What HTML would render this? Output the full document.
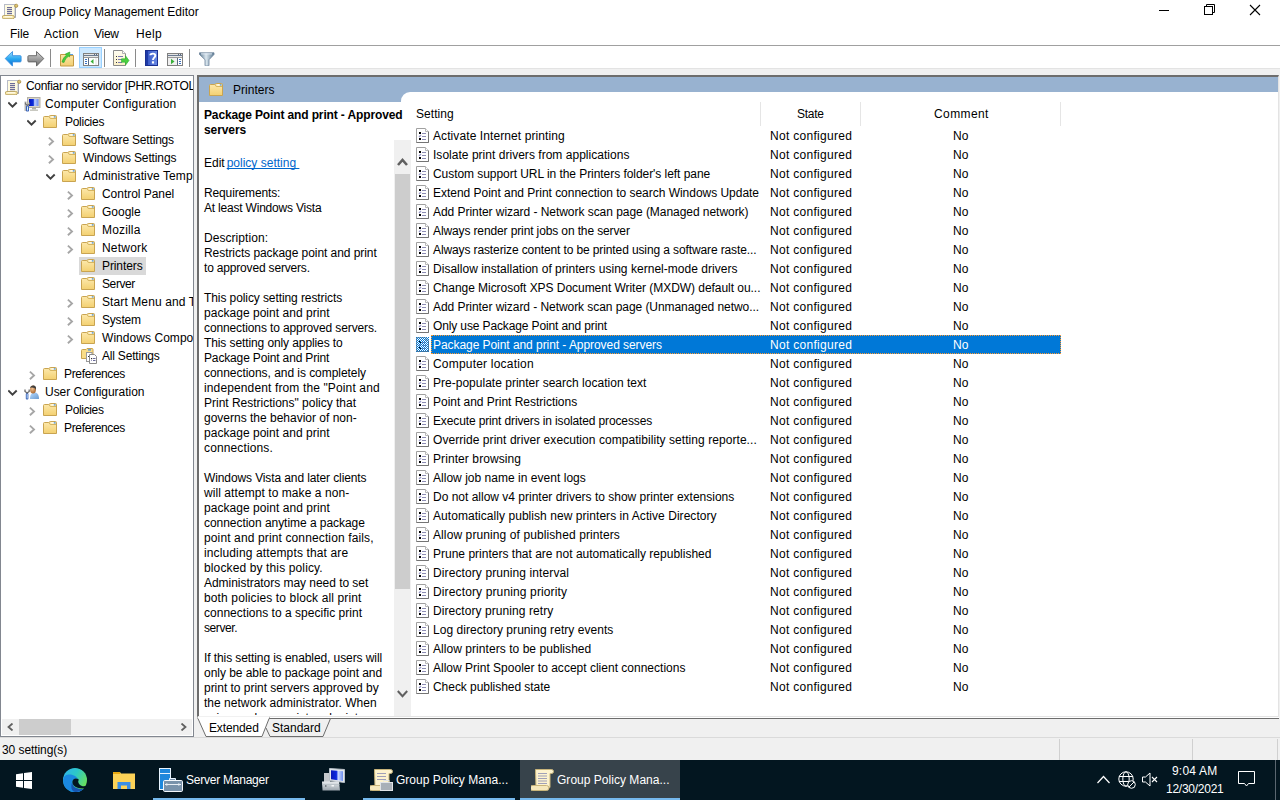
<!DOCTYPE html><html><head><meta charset="utf-8"><style>
html,body{margin:0;padding:0;}
body{width:1280px;height:800px;overflow:hidden;position:relative;background:#ffffff;font-family:"Liberation Sans",sans-serif;font-size:12px;color:#000;}
.a{position:absolute;display:block;}
.t{position:absolute;white-space:nowrap;font-size:12px;line-height:14px;}
.w{color:#fff;}
</style></head><body>
<svg class="a" style="left:2px;top:3px;" width="17" height="16" viewBox="0 0 17 16"><rect x="2.5" y="1.5" width="10.5" height="12.5" fill="#fffbe0" stroke="#b8bcc8"/><path d="M13.5,2.5V14.5H3" fill="none" stroke="#a0a4b4"/><circle cx="14.2" cy="2.8" r="1.6" fill="#dcc472" stroke="#a88c40" stroke-width="0.8"/><rect x="5" y="4" width="5" height="1.2" fill="#6c6c98"/><rect x="5" y="6" width="5" height="1.2" fill="#6c6c98"/><rect x="5" y="8" width="5" height="1.2" fill="#6c6c98"/><rect x="5" y="10" width="5" height="1.2" fill="#6c6c98"/><path d="M1.8,12.5h9a1.6,1.6 0 0 1 0,3.2h-9a1.6,1.6 0 0 1 0,-3.2z" fill="#fbeaa8" stroke="#b8a060" stroke-width="0.9"/><rect x="2.5" y="13.3" width="7.5" height="1" fill="#ffffff"/></svg>
<div class="t" style="left:22px;top:5px;letter-spacing:-0.003px;">Group Policy Management Editor</div>
<div class="a" style="left:1159px;top:10px;width:10px;height:1px;background:#000"></div>
<svg class="a" style="left:1203px;top:4px;" width="12" height="12" viewBox="0 0 12 12"><rect x="1.5" y="2.5" width="8" height="8" fill="#fff" stroke="#000"/><path d="M3.5,2.5V0.5H11.5V8.5H9.5" fill="none" stroke="#000"/></svg>
<svg class="a" style="left:1249px;top:4px;" width="12" height="12" viewBox="0 0 12 12"><path d="M1,1L11,11M11,1L1,11" stroke="#000" stroke-width="1.1"/></svg>
<div class="t" style="left:10px;top:27px;letter-spacing:-0.033px;">File</div>
<div class="t" style="left:44px;top:27px;letter-spacing:0.240px;">Action</div>
<div class="t" style="left:94px;top:27px;letter-spacing:-0.267px;">View</div>
<div class="t" style="left:136px;top:27px;letter-spacing:0.300px;">Help</div>
<div class="a" style="left:0px;top:45px;width:1280px;height:1px;background:#a0a0a0"></div>
<div class="a" style="left:0px;top:68px;width:1280px;height:1px;background:#e3e3e3"></div>
<div class="a" style="left:0px;top:69px;width:1280px;height:691px;background:#f0f0f0"></div>
<svg class="a" style="left:4px;top:50px;" width="18" height="17" viewBox="0 0 18 17"><defs><linearGradient id="gb" x1="0" y1="0" x2="0" y2="1"><stop offset="0" stop-color="#9ee0ff"/><stop offset="0.5" stop-color="#2aa8f0"/><stop offset="1" stop-color="#0a6ad0"/></linearGradient></defs><path d="M1.2,8.5L8.5,1.5v4.2h7.8a0.8,0.8 0 0 1 0.8,0.8v4.6a0.8,0.8 0 0 1 -0.8,0.8h-7.8v4.2z" fill="url(#gb)" stroke="#3a8ee0" stroke-width="0.9"/></svg>
<svg class="a" style="left:27px;top:50px;" width="18" height="17" viewBox="0 0 18 17"><defs><linearGradient id="gg" x1="0" y1="0" x2="0" y2="1"><stop offset="0" stop-color="#d8d8d8"/><stop offset="0.5" stop-color="#a0a0a0"/><stop offset="1" stop-color="#6a6a6a"/></linearGradient></defs><path d="M16.8,8.5L9.5,1.5v4.2h-7.8a0.8,0.8 0 0 0 -0.8,0.8v4.6a0.8,0.8 0 0 0 0.8,0.8h7.8v4.2z" fill="url(#gg)" stroke="#606060" stroke-width="0.9"/></svg>
<div class="a" style="left:50px;top:49px;width:1px;height:18px;background:#8a8a8a"></div>
<svg class="a" style="left:60px;top:51px;" width="15" height="16" viewBox="0 0 15 16"><defs><linearGradient id="gu" x1="0" y1="0" x2="0" y2="1"><stop offset="0" stop-color="#fbe6a8"/><stop offset="1" stop-color="#f2cf72"/></linearGradient></defs><path d="M0.5,3.5h6l1,1h6v10.5h-13z" fill="url(#gu)" stroke="#c49a45"/><rect x="10" y="3" width="3" height="1" fill="#5aa0e8"/><path d="M2,11C3,7.5 4.5,5.5 6.5,4.3L5.3,3L9.8,1L9.5,6L8.3,5.3C6.8,6.3 5,8.5 4,11.5z" fill="#44cc3a" stroke="#2aa02a" stroke-width="0.6"/></svg>
<div class="a" style="left:79px;top:47px;width:23px;height:21px;background:#cce8ff;border:1px solid #99d1ff;box-sizing:border-box"></div>
<svg class="a" style="left:83px;top:53px;" width="16" height="13" viewBox="0 0 16 13"><rect x="0.5" y="0.5" width="15" height="12" fill="#fff" stroke="#808080"/><rect x="1" y="1" width="14" height="1" fill="#e4e4e4"/><rect x="11" y="1" width="1" height="1" fill="#5a6a80"/><rect x="13" y="1" width="1" height="1" fill="#5a6a80"/><rect x="1" y="2" width="14" height="1" fill="#6a7a90"/><rect x="1" y="3" width="14" height="1" fill="#e8e8e8"/><rect x="1" y="4" width="14" height="1" fill="#9a9a9a"/><rect x="5" y="5" width="1" height="7" fill="#5a6a80"/><rect x="2" y="6" width="2" height="1" fill="#3a70c0"/><rect x="2" y="8" width="2" height="1" fill="#3a70c0"/><rect x="2" y="10" width="2" height="1" fill="#3a70c0"/><rect x="12" y="5" width="2" height="7" fill="#efefef"/><path d="M7.5,8.5L10.5,6v5z" fill="#3ab03a"/></svg>
<div class="a" style="left:104px;top:49px;width:1px;height:18px;background:#8a8a8a"></div>
<svg class="a" style="left:113px;top:50px;" width="17" height="16" viewBox="0 0 17 16"><defs><linearGradient id="gx" x1="0" y1="0" x2="0" y2="1"><stop offset="0" stop-color="#fffdf2"/><stop offset="1" stop-color="#fbf0c8"/></linearGradient></defs><path d="M0.5,0.5h9l3,3v12h-12z" fill="url(#gx)" stroke="#8a8a8a"/><path d="M9.5,0.5v3h3" fill="#fff" stroke="#b0b0b0"/><rect x="3" y="6" width="1" height="1" fill="#333"/><rect x="3" y="9" width="1" height="1" fill="#333"/><rect x="3" y="12" width="1" height="1" fill="#333"/><rect x="5" y="6" width="5" height="1" fill="#7a7ab0"/><rect x="5" y="9" width="4" height="1" fill="#7a7ab0"/><rect x="5" y="12" width="4" height="1" fill="#7a7ab0"/><path d="M8.5,8.8h4v-3l3.5,4.7l-3.5,4.7v-3h-4z" fill="#4ad040" stroke="#30b030" stroke-width="0.6"/></svg>
<div class="a" style="left:135px;top:49px;width:1px;height:18px;background:#8a8a8a"></div>
<svg class="a" style="left:145px;top:50px;" width="14" height="16" viewBox="0 0 14 16"><defs><linearGradient id="gh" x1="0" y1="0" x2="1" y2="0"><stop offset="0" stop-color="#3050c0"/><stop offset="1" stop-color="#6a8ae6"/></linearGradient></defs><rect x="0.5" y="0.5" width="12" height="15" fill="url(#gh)" stroke="#1a2f90"/><rect x="1" y="1" width="2" height="14" fill="#1e3aa8"/><path d="M5.3,5.2C5.3,3.2 10.3,3 10.3,5.6C10.3,7.6 8,7.8 8,10" fill="none" stroke="#fff" stroke-width="1.9"/><rect x="6.9" y="11.3" width="2.2" height="2.2" fill="#fff"/></svg>
<svg class="a" style="left:167px;top:53px;" width="16" height="13" viewBox="0 0 16 13"><rect x="0.5" y="0.5" width="15" height="12" fill="#fff" stroke="#808080"/><rect x="1" y="1" width="14" height="1" fill="#e4e4e4"/><rect x="11" y="1" width="1" height="1" fill="#5a6a80"/><rect x="13" y="1" width="1" height="1" fill="#5a6a80"/><rect x="1" y="2" width="14" height="1" fill="#6a7a90"/><rect x="1" y="3" width="14" height="1" fill="#e8e8e8"/><rect x="1" y="4" width="14" height="1" fill="#9a9a9a"/><rect x="1" y="5" width="9" height="7" fill="#f0f0f0"/><rect x="10" y="5" width="1" height="7" fill="#5a6a80"/><rect x="12" y="6" width="2" height="1" fill="#3a70c0"/><rect x="12" y="8" width="2" height="1" fill="#3a70c0"/><rect x="12" y="10" width="2" height="1" fill="#3a70c0"/><path d="M4,5.8L7.5,8.5L4,11.2z" fill="#3ab03a"/></svg>
<div class="a" style="left:189px;top:49px;width:1px;height:18px;background:#8a8a8a"></div>
<svg class="a" style="left:199px;top:52px;" width="16" height="14" viewBox="0 0 16 14"><defs><linearGradient id="gf" x1="0" y1="0" x2="1" y2="0"><stop offset="0" stop-color="#5a7890"/><stop offset="0.45" stop-color="#dce8f0"/><stop offset="1" stop-color="#5a7890"/></linearGradient></defs><path d="M0.5,0.8h14.5v1.7l-5,5.2v5.5a0.8,0.8 0 0 1 -0.8,0.8h-2.4a0.8,0.8 0 0 1 -0.8,-0.8v-5.5l-5.5,-5.2z" fill="url(#gf)" stroke="#6b8199" stroke-width="0.8"/><rect x="2" y="1.5" width="11" height="0.8" fill="#eef6ff"/></svg>
<div class="a" style="left:0px;top:75px;width:194px;height:662px;background:#fff;border:1px solid #828790;box-sizing:border-box"></div>
<div class="a" style="left:1px;top:76px;width:192px;height:643px;overflow:hidden;">
<div class="a" style="left:78px;top:181px;width:67px;height:18px;background:#d9d9d9"></div>
<svg class="a" style="left:4px;top:3px;" width="17" height="16" viewBox="0 0 17 16"><rect x="2.5" y="1.5" width="10.5" height="12.5" fill="#fffbe0" stroke="#b8bcc8"/><path d="M13.5,2.5V14.5H3" fill="none" stroke="#a0a4b4"/><circle cx="14.2" cy="2.8" r="1.6" fill="#dcc472" stroke="#a88c40" stroke-width="0.8"/><rect x="5" y="4" width="5" height="1.2" fill="#6c6c98"/><rect x="5" y="6" width="5" height="1.2" fill="#6c6c98"/><rect x="5" y="8" width="5" height="1.2" fill="#6c6c98"/><rect x="5" y="10" width="5" height="1.2" fill="#6c6c98"/><path d="M1.8,12.5h9a1.6,1.6 0 0 1 0,3.2h-9a1.6,1.6 0 0 1 0,-3.2z" fill="#fbeaa8" stroke="#b8a060" stroke-width="0.9"/><rect x="2.5" y="13.3" width="7.5" height="1" fill="#ffffff"/></svg>
<div class="t" style="left:25px;top:3px;letter-spacing:-0.3px">Confiar no servidor [PHR.ROTOL</div>
<svg class="a" style="left:7px;top:24px;" width="10" height="9" viewBox="0 0 10 9"><path d="M0.3,2.5L4.5,6.7L8.7,2.5" fill="none" stroke="#404040" stroke-width="1.9"/></svg>
<svg class="a" style="left:23px;top:21px;" width="17" height="15" viewBox="0 0 17 15"><defs><linearGradient id="gc" x1="0" y1="0" x2="1" y2="0"><stop offset="0" stop-color="#0010c8"/><stop offset="0.45" stop-color="#1030d8"/><stop offset="0.6" stop-color="#c0d0ff"/><stop offset="1" stop-color="#6a8af0"/></linearGradient></defs><rect x="3.5" y="0.5" width="12.5" height="10" fill="#d8d4c8" stroke="#b4b0a4"/><rect x="5" y="2" width="9.5" height="7" fill="url(#gc)"/><rect x="8" y="11" width="4" height="1.5" fill="#b0b0a8"/><rect x="6" y="12.5" width="8" height="1.5" fill="#c8c8c0"/><rect x="0.5" y="4.5" width="2" height="9.5" fill="#b8b8b8"/><rect x="2" y="8.5" width="3" height="6" rx="0.8" fill="#3a62b8"/><rect x="3" y="9.5" width="1" height="4" fill="#d0ecff"/><path d="M1.5,5.5V7L3.5,8.5L5.5,7V5.5" fill="none" stroke="#707070" stroke-width="1.2"/></svg>
<div class="t" style="left:44px;top:21px;letter-spacing:0.179px;">Computer Configuration</div>
<svg class="a" style="left:26px;top:42px;" width="10" height="9" viewBox="0 0 10 9"><path d="M0.3,2.5L4.5,6.7L8.7,2.5" fill="none" stroke="#404040" stroke-width="1.9"/></svg>
<svg class="a" style="left:42px;top:39px;" width="14" height="13" viewBox="0 0 14 13"><defs><linearGradient id="gfo" x1="0" y1="0" x2="0" y2="1"><stop offset="0" stop-color="#fdeab0"/><stop offset="1" stop-color="#f3d070"/></linearGradient></defs><path d="M0.5,12.5V2.5a1,1 0 0 1 1,-1H5.8L7.2,0.5H12.5a1,1 0 0 1 1,1V12.5Z" fill="url(#gfo)" stroke="#c9a451"/><path d="M6.2,1.8L7.2,3.5H13" fill="none" stroke="#d6b560"/><rect x="8.3" y="1.3" width="3" height="1.2" fill="#ffffff"/><rect x="10.8" y="1.3" width="1.8" height="1.2" fill="#3d8ee8"/></svg>
<div class="t" style="left:64px;top:39px;letter-spacing:-0.279px;">Policies</div>
<svg class="a" style="left:47px;top:60px;" width="7" height="11" viewBox="0 0 7 11"><path d="M0.9,1.6L5,5.4L0.9,9.2" fill="none" stroke="#a6a6a6" stroke-width="1.9"/></svg>
<svg class="a" style="left:61px;top:57px;" width="14" height="13" viewBox="0 0 14 13"><defs><linearGradient id="gfo" x1="0" y1="0" x2="0" y2="1"><stop offset="0" stop-color="#fdeab0"/><stop offset="1" stop-color="#f3d070"/></linearGradient></defs><path d="M0.5,12.5V2.5a1,1 0 0 1 1,-1H5.8L7.2,0.5H12.5a1,1 0 0 1 1,1V12.5Z" fill="url(#gfo)" stroke="#c9a451"/><path d="M6.2,1.8L7.2,3.5H13" fill="none" stroke="#d6b560"/><rect x="8.3" y="1.3" width="3" height="1.2" fill="#ffffff"/><rect x="10.8" y="1.3" width="1.8" height="1.2" fill="#3d8ee8"/></svg>
<div class="t" style="left:82px;top:57px;letter-spacing:-0.184px;">Software Settings</div>
<svg class="a" style="left:47px;top:78px;" width="7" height="11" viewBox="0 0 7 11"><path d="M0.9,1.6L5,5.4L0.9,9.2" fill="none" stroke="#a6a6a6" stroke-width="1.9"/></svg>
<svg class="a" style="left:61px;top:75px;" width="14" height="13" viewBox="0 0 14 13"><defs><linearGradient id="gfo" x1="0" y1="0" x2="0" y2="1"><stop offset="0" stop-color="#fdeab0"/><stop offset="1" stop-color="#f3d070"/></linearGradient></defs><path d="M0.5,12.5V2.5a1,1 0 0 1 1,-1H5.8L7.2,0.5H12.5a1,1 0 0 1 1,1V12.5Z" fill="url(#gfo)" stroke="#c9a451"/><path d="M6.2,1.8L7.2,3.5H13" fill="none" stroke="#d6b560"/><rect x="8.3" y="1.3" width="3" height="1.2" fill="#ffffff"/><rect x="10.8" y="1.3" width="1.8" height="1.2" fill="#3d8ee8"/></svg>
<div class="t" style="left:82px;top:75px;letter-spacing:-0.130px;">Windows Settings</div>
<svg class="a" style="left:45px;top:96px;" width="10" height="9" viewBox="0 0 10 9"><path d="M0.3,2.5L4.5,6.7L8.7,2.5" fill="none" stroke="#404040" stroke-width="1.9"/></svg>
<svg class="a" style="left:61px;top:93px;" width="14" height="13" viewBox="0 0 14 13"><defs><linearGradient id="gfo" x1="0" y1="0" x2="0" y2="1"><stop offset="0" stop-color="#fdeab0"/><stop offset="1" stop-color="#f3d070"/></linearGradient></defs><path d="M0.5,12.5V2.5a1,1 0 0 1 1,-1H5.8L7.2,0.5H12.5a1,1 0 0 1 1,1V12.5Z" fill="url(#gfo)" stroke="#c9a451"/><path d="M6.2,1.8L7.2,3.5H13" fill="none" stroke="#d6b560"/><rect x="8.3" y="1.3" width="3" height="1.2" fill="#ffffff"/><rect x="10.8" y="1.3" width="1.8" height="1.2" fill="#3d8ee8"/></svg>
<div class="t" style="left:82px;top:93px;letter-spacing:0.1px">Administrative Templates</div>
<svg class="a" style="left:66px;top:114px;" width="7" height="11" viewBox="0 0 7 11"><path d="M0.9,1.6L5,5.4L0.9,9.2" fill="none" stroke="#a6a6a6" stroke-width="1.9"/></svg>
<svg class="a" style="left:80px;top:111px;" width="14" height="13" viewBox="0 0 14 13"><defs><linearGradient id="gfo" x1="0" y1="0" x2="0" y2="1"><stop offset="0" stop-color="#fdeab0"/><stop offset="1" stop-color="#f3d070"/></linearGradient></defs><path d="M0.5,12.5V2.5a1,1 0 0 1 1,-1H5.8L7.2,0.5H12.5a1,1 0 0 1 1,1V12.5Z" fill="url(#gfo)" stroke="#c9a451"/><path d="M6.2,1.8L7.2,3.5H13" fill="none" stroke="#d6b560"/><rect x="8.3" y="1.3" width="3" height="1.2" fill="#ffffff"/><rect x="10.8" y="1.3" width="1.8" height="1.2" fill="#3d8ee8"/></svg>
<div class="t" style="left:101px;top:111px;letter-spacing:-0.042px;">Control Panel</div>
<svg class="a" style="left:66px;top:132px;" width="7" height="11" viewBox="0 0 7 11"><path d="M0.9,1.6L5,5.4L0.9,9.2" fill="none" stroke="#a6a6a6" stroke-width="1.9"/></svg>
<svg class="a" style="left:80px;top:129px;" width="14" height="13" viewBox="0 0 14 13"><defs><linearGradient id="gfo" x1="0" y1="0" x2="0" y2="1"><stop offset="0" stop-color="#fdeab0"/><stop offset="1" stop-color="#f3d070"/></linearGradient></defs><path d="M0.5,12.5V2.5a1,1 0 0 1 1,-1H5.8L7.2,0.5H12.5a1,1 0 0 1 1,1V12.5Z" fill="url(#gfo)" stroke="#c9a451"/><path d="M6.2,1.8L7.2,3.5H13" fill="none" stroke="#d6b560"/><rect x="8.3" y="1.3" width="3" height="1.2" fill="#ffffff"/><rect x="10.8" y="1.3" width="1.8" height="1.2" fill="#3d8ee8"/></svg>
<div class="t" style="left:101px;top:129px;letter-spacing:-0.000px;">Google</div>
<svg class="a" style="left:66px;top:150px;" width="7" height="11" viewBox="0 0 7 11"><path d="M0.9,1.6L5,5.4L0.9,9.2" fill="none" stroke="#a6a6a6" stroke-width="1.9"/></svg>
<svg class="a" style="left:80px;top:147px;" width="14" height="13" viewBox="0 0 14 13"><defs><linearGradient id="gfo" x1="0" y1="0" x2="0" y2="1"><stop offset="0" stop-color="#fdeab0"/><stop offset="1" stop-color="#f3d070"/></linearGradient></defs><path d="M0.5,12.5V2.5a1,1 0 0 1 1,-1H5.8L7.2,0.5H12.5a1,1 0 0 1 1,1V12.5Z" fill="url(#gfo)" stroke="#c9a451"/><path d="M6.2,1.8L7.2,3.5H13" fill="none" stroke="#d6b560"/><rect x="8.3" y="1.3" width="3" height="1.2" fill="#ffffff"/><rect x="10.8" y="1.3" width="1.8" height="1.2" fill="#3d8ee8"/></svg>
<div class="t" style="left:101px;top:147px;letter-spacing:0.167px;">Mozilla</div>
<svg class="a" style="left:66px;top:168px;" width="7" height="11" viewBox="0 0 7 11"><path d="M0.9,1.6L5,5.4L0.9,9.2" fill="none" stroke="#a6a6a6" stroke-width="1.9"/></svg>
<svg class="a" style="left:80px;top:165px;" width="14" height="13" viewBox="0 0 14 13"><defs><linearGradient id="gfo" x1="0" y1="0" x2="0" y2="1"><stop offset="0" stop-color="#fdeab0"/><stop offset="1" stop-color="#f3d070"/></linearGradient></defs><path d="M0.5,12.5V2.5a1,1 0 0 1 1,-1H5.8L7.2,0.5H12.5a1,1 0 0 1 1,1V12.5Z" fill="url(#gfo)" stroke="#c9a451"/><path d="M6.2,1.8L7.2,3.5H13" fill="none" stroke="#d6b560"/><rect x="8.3" y="1.3" width="3" height="1.2" fill="#ffffff"/><rect x="10.8" y="1.3" width="1.8" height="1.2" fill="#3d8ee8"/></svg>
<div class="t" style="left:101px;top:165px;letter-spacing:0.200px;">Network</div>
<svg class="a" style="left:80px;top:183px;" width="14" height="13" viewBox="0 0 14 13"><defs><linearGradient id="gfo" x1="0" y1="0" x2="0" y2="1"><stop offset="0" stop-color="#fdeab0"/><stop offset="1" stop-color="#f3d070"/></linearGradient></defs><path d="M0.5,12.5V2.5a1,1 0 0 1 1,-1H5.8L7.2,0.5H12.5a1,1 0 0 1 1,1V12.5Z" fill="url(#gfo)" stroke="#c9a451"/><path d="M6.2,1.8L7.2,3.5H13" fill="none" stroke="#d6b560"/><rect x="8.3" y="1.3" width="3" height="1.2" fill="#ffffff"/><rect x="10.8" y="1.3" width="1.8" height="1.2" fill="#3d8ee8"/></svg>
<div class="t" style="left:101px;top:183px;letter-spacing:-0.100px;">Printers</div>
<svg class="a" style="left:80px;top:201px;" width="14" height="13" viewBox="0 0 14 13"><defs><linearGradient id="gfo" x1="0" y1="0" x2="0" y2="1"><stop offset="0" stop-color="#fdeab0"/><stop offset="1" stop-color="#f3d070"/></linearGradient></defs><path d="M0.5,12.5V2.5a1,1 0 0 1 1,-1H5.8L7.2,0.5H12.5a1,1 0 0 1 1,1V12.5Z" fill="url(#gfo)" stroke="#c9a451"/><path d="M6.2,1.8L7.2,3.5H13" fill="none" stroke="#d6b560"/><rect x="8.3" y="1.3" width="3" height="1.2" fill="#ffffff"/><rect x="10.8" y="1.3" width="1.8" height="1.2" fill="#3d8ee8"/></svg>
<div class="t" style="left:101px;top:201px;letter-spacing:-0.400px;">Server</div>
<svg class="a" style="left:66px;top:222px;" width="7" height="11" viewBox="0 0 7 11"><path d="M0.9,1.6L5,5.4L0.9,9.2" fill="none" stroke="#a6a6a6" stroke-width="1.9"/></svg>
<svg class="a" style="left:80px;top:219px;" width="14" height="13" viewBox="0 0 14 13"><defs><linearGradient id="gfo" x1="0" y1="0" x2="0" y2="1"><stop offset="0" stop-color="#fdeab0"/><stop offset="1" stop-color="#f3d070"/></linearGradient></defs><path d="M0.5,12.5V2.5a1,1 0 0 1 1,-1H5.8L7.2,0.5H12.5a1,1 0 0 1 1,1V12.5Z" fill="url(#gfo)" stroke="#c9a451"/><path d="M6.2,1.8L7.2,3.5H13" fill="none" stroke="#d6b560"/><rect x="8.3" y="1.3" width="3" height="1.2" fill="#ffffff"/><rect x="10.8" y="1.3" width="1.8" height="1.2" fill="#3d8ee8"/></svg>
<div class="t" style="left:101px;top:219px;letter-spacing:0.1px">Start Menu and Taskbar</div>
<svg class="a" style="left:66px;top:240px;" width="7" height="11" viewBox="0 0 7 11"><path d="M0.9,1.6L5,5.4L0.9,9.2" fill="none" stroke="#a6a6a6" stroke-width="1.9"/></svg>
<svg class="a" style="left:80px;top:237px;" width="14" height="13" viewBox="0 0 14 13"><defs><linearGradient id="gfo" x1="0" y1="0" x2="0" y2="1"><stop offset="0" stop-color="#fdeab0"/><stop offset="1" stop-color="#f3d070"/></linearGradient></defs><path d="M0.5,12.5V2.5a1,1 0 0 1 1,-1H5.8L7.2,0.5H12.5a1,1 0 0 1 1,1V12.5Z" fill="url(#gfo)" stroke="#c9a451"/><path d="M6.2,1.8L7.2,3.5H13" fill="none" stroke="#d6b560"/><rect x="8.3" y="1.3" width="3" height="1.2" fill="#ffffff"/><rect x="10.8" y="1.3" width="1.8" height="1.2" fill="#3d8ee8"/></svg>
<div class="t" style="left:101px;top:237px;letter-spacing:-0.200px;">System</div>
<svg class="a" style="left:66px;top:258px;" width="7" height="11" viewBox="0 0 7 11"><path d="M0.9,1.6L5,5.4L0.9,9.2" fill="none" stroke="#a6a6a6" stroke-width="1.9"/></svg>
<svg class="a" style="left:80px;top:255px;" width="14" height="13" viewBox="0 0 14 13"><defs><linearGradient id="gfo" x1="0" y1="0" x2="0" y2="1"><stop offset="0" stop-color="#fdeab0"/><stop offset="1" stop-color="#f3d070"/></linearGradient></defs><path d="M0.5,12.5V2.5a1,1 0 0 1 1,-1H5.8L7.2,0.5H12.5a1,1 0 0 1 1,1V12.5Z" fill="url(#gfo)" stroke="#c9a451"/><path d="M6.2,1.8L7.2,3.5H13" fill="none" stroke="#d6b560"/><rect x="8.3" y="1.3" width="3" height="1.2" fill="#ffffff"/><rect x="10.8" y="1.3" width="1.8" height="1.2" fill="#3d8ee8"/></svg>
<div class="t" style="left:101px;top:255px;letter-spacing:0.05px">Windows Components</div>
<svg class="a" style="left:80px;top:272px;" width="17" height="17" viewBox="0 0 17 17"><path d="M0.5,10.5V2.5a1,1 0 0 1 1,-1H5L6,0.5H11a1,1 0 0 1 1,1V10.5Z" fill="#f9dd88" stroke="#c9a451"/><rect x="7" y="1.3" width="3" height="1.2" fill="#3d8ee8"/><rect x="5.5" y="4.5" width="5.5" height="9" fill="#fff" stroke="#9a9a9a"/><rect x="7" y="8" width="1" height="1" fill="#333"/><path d="M8.5,6.5H13.5L15.5,8.5V15.5H8.5Z" fill="#fff" stroke="#8a8a8a"/><rect x="10" y="10" width="1.2" height="1.2" fill="#333"/><rect x="12" y="10" width="2.5" height="1" fill="#6a6a98"/><rect x="10" y="12" width="1" height="1" fill="#9a9ac8"/><rect x="12" y="12" width="2.5" height="1" fill="#6a6a98"/></svg>
<div class="t" style="left:101px;top:273px;letter-spacing:-0.200px;">All Settings</div>
<svg class="a" style="left:28px;top:294px;" width="7" height="11" viewBox="0 0 7 11"><path d="M0.9,1.6L5,5.4L0.9,9.2" fill="none" stroke="#a6a6a6" stroke-width="1.9"/></svg>
<svg class="a" style="left:42px;top:291px;" width="14" height="13" viewBox="0 0 14 13"><defs><linearGradient id="gfo" x1="0" y1="0" x2="0" y2="1"><stop offset="0" stop-color="#fdeab0"/><stop offset="1" stop-color="#f3d070"/></linearGradient></defs><path d="M0.5,12.5V2.5a1,1 0 0 1 1,-1H5.8L7.2,0.5H12.5a1,1 0 0 1 1,1V12.5Z" fill="url(#gfo)" stroke="#c9a451"/><path d="M6.2,1.8L7.2,3.5H13" fill="none" stroke="#d6b560"/><rect x="8.3" y="1.3" width="3" height="1.2" fill="#ffffff"/><rect x="10.8" y="1.3" width="1.8" height="1.2" fill="#3d8ee8"/></svg>
<div class="t" style="left:63px;top:291px;letter-spacing:-0.340px;">Preferences</div>
<svg class="a" style="left:7px;top:312px;" width="10" height="9" viewBox="0 0 10 9"><path d="M0.3,2.5L4.5,6.7L8.7,2.5" fill="none" stroke="#404040" stroke-width="1.9"/></svg>
<svg class="a" style="left:23px;top:308px;" width="17" height="16" viewBox="0 0 17 16"><defs><radialGradient id="gface" cx="0.4" cy="0.4" r="0.7"><stop offset="0" stop-color="#f0c090"/><stop offset="1" stop-color="#a05a20"/></radialGradient><linearGradient id="gbody" x1="0" y1="0" x2="1" y2="1"><stop offset="0" stop-color="#b8dcff"/><stop offset="1" stop-color="#6a9ad0"/></linearGradient></defs><path d="M6,15C6,10 8,8.5 10.5,8.5C13,8.5 15,10 15,15z" fill="url(#gbody)"/><ellipse cx="9" cy="5.5" rx="2.9" ry="4" fill="url(#gface)"/><path d="M6,4C6.5,1 11,0.5 12,3.5L12,6C11,3.5 8,3 6,4z" fill="#404040"/><rect x="1.8" y="9" width="2.6" height="6.5" rx="1" fill="#3a62b8"/><rect x="2.7" y="10" width="0.9" height="4.5" fill="#c8e8ff"/><path d="M1,5.5V7.5L3.1,9L5.2,7.5V5.5" fill="none" stroke="#6a6a6a" stroke-width="1.3"/></svg>
<div class="t" style="left:44px;top:309px;letter-spacing:-0.035px;">User Configuration</div>
<svg class="a" style="left:28px;top:330px;" width="7" height="11" viewBox="0 0 7 11"><path d="M0.9,1.6L5,5.4L0.9,9.2" fill="none" stroke="#a6a6a6" stroke-width="1.9"/></svg>
<svg class="a" style="left:42px;top:327px;" width="14" height="13" viewBox="0 0 14 13"><defs><linearGradient id="gfo" x1="0" y1="0" x2="0" y2="1"><stop offset="0" stop-color="#fdeab0"/><stop offset="1" stop-color="#f3d070"/></linearGradient></defs><path d="M0.5,12.5V2.5a1,1 0 0 1 1,-1H5.8L7.2,0.5H12.5a1,1 0 0 1 1,1V12.5Z" fill="url(#gfo)" stroke="#c9a451"/><path d="M6.2,1.8L7.2,3.5H13" fill="none" stroke="#d6b560"/><rect x="8.3" y="1.3" width="3" height="1.2" fill="#ffffff"/><rect x="10.8" y="1.3" width="1.8" height="1.2" fill="#3d8ee8"/></svg>
<div class="t" style="left:64px;top:327px;letter-spacing:-0.343px;">Policies</div>
<svg class="a" style="left:28px;top:348px;" width="7" height="11" viewBox="0 0 7 11"><path d="M0.9,1.6L5,5.4L0.9,9.2" fill="none" stroke="#a6a6a6" stroke-width="1.9"/></svg>
<svg class="a" style="left:42px;top:345px;" width="14" height="13" viewBox="0 0 14 13"><defs><linearGradient id="gfo" x1="0" y1="0" x2="0" y2="1"><stop offset="0" stop-color="#fdeab0"/><stop offset="1" stop-color="#f3d070"/></linearGradient></defs><path d="M0.5,12.5V2.5a1,1 0 0 1 1,-1H5.8L7.2,0.5H12.5a1,1 0 0 1 1,1V12.5Z" fill="url(#gfo)" stroke="#c9a451"/><path d="M6.2,1.8L7.2,3.5H13" fill="none" stroke="#d6b560"/><rect x="8.3" y="1.3" width="3" height="1.2" fill="#ffffff"/><rect x="10.8" y="1.3" width="1.8" height="1.2" fill="#3d8ee8"/></svg>
<div class="t" style="left:63px;top:345px;letter-spacing:-0.340px;">Preferences</div>
</div>
<div class="a" style="left:2px;top:719px;width:190px;height:16px;background:#f0f0f0"></div>
<div class="a" style="left:19px;top:719px;width:52px;height:16px;background:#cdcdcd"></div>
<svg class="a" style="left:7px;top:723px;" width="7" height="8" viewBox="0 0 7 8"><path d="M5.5,0.5L1.5,4L5.5,7.5" fill="none" stroke="#606060" stroke-width="1.8"/></svg>
<svg class="a" style="left:180px;top:723px;" width="7" height="8" viewBox="0 0 7 8"><path d="M1.5,0.5L5.5,4L1.5,7.5" fill="none" stroke="#606060" stroke-width="1.8"/></svg>
<div class="a" style="left:197px;top:75px;width:1082px;height:642px;background:#fff;box-sizing:border-box;border-top:2px solid #6d6d6d;border-left:2px solid #6d6d6d;border-right:1px solid #e3e3e3;border-bottom:1px solid #e3e3e3"></div>
<div class="a" style="left:197px;top:717px;width:1082px;height:1px;background:#fff"></div>
<div class="a" style="left:199px;top:77px;width:1079px;height:25px;background:#98b2d0"></div>
<svg class="a" style="left:209px;top:83px;" width="14" height="13" viewBox="0 0 14 13"><defs><linearGradient id="gfo" x1="0" y1="0" x2="0" y2="1"><stop offset="0" stop-color="#fdeab0"/><stop offset="1" stop-color="#f3d070"/></linearGradient></defs><path d="M0.5,12.5V2.5a1,1 0 0 1 1,-1H5.8L7.2,0.5H12.5a1,1 0 0 1 1,1V12.5Z" fill="url(#gfo)" stroke="#c9a451"/><path d="M6.2,1.8L7.2,3.5H13" fill="none" stroke="#d6b560"/><rect x="8.3" y="1.3" width="3" height="1.2" fill="#ffffff"/><rect x="10.8" y="1.3" width="1.8" height="1.2" fill="#3d8ee8"/></svg>
<div class="t" style="left:233px;top:83px;letter-spacing:0.014px;">Printers</div>
<div class="a" style="left:401px;top:92px;width:877px;height:624px;background:#fff;border-top-left-radius:9px"></div>
<div class="t" style="left:204px;top:108px;letter-spacing:-0.132px;"><b>Package Point and print - Approved</b></div>
<div class="t" style="left:204px;top:123px;letter-spacing:-0.092px;"><b>servers</b></div>
<div class="t" style="left:204px;top:156px;">Edit<span style="margin-left:2px;color:#0066cc;text-decoration:underline;text-decoration-skip-ink:none">policy setting&nbsp;</span></div>
<div class="a" style="left:199px;top:102px;width:195px;height:613px;overflow:hidden">
<div class="t" style="left:5px;top:84px;letter-spacing:-0.133px;">Requirements:</div>
<div class="t" style="left:5px;top:99px;letter-spacing:-0.200px;">At least Windows Vista</div>
<div class="t" style="left:5px;top:129px;letter-spacing:0.055px;">Description:</div>
<div class="t" style="left:5px;top:144px;letter-spacing:-0.062px;">Restricts package point and print</div>
<div class="t" style="left:5px;top:159px;letter-spacing:-0.179px;">to approved servers.</div>
<div class="t" style="left:5px;top:189px;letter-spacing:-0.089px;">This policy setting restricts</div>
<div class="t" style="left:5px;top:204px;letter-spacing:0.032px;">package point and print</div>
<div class="t" style="left:5px;top:219px;letter-spacing:-0.116px;">connections to approved servers.</div>
<div class="t" style="left:5px;top:234px;letter-spacing:-0.100px;">This setting only applies to</div>
<div class="t" style="left:5px;top:249px;letter-spacing:-0.150px;">Package Point and Print</div>
<div class="t" style="left:5px;top:264px;letter-spacing:-0.045px;">connections, and is completely</div>
<div class="t" style="left:5px;top:279px;letter-spacing:0.130px;">independent from the "Point and</div>
<div class="t" style="left:5px;top:294px;letter-spacing:-0.010px;">Print Restrictions" policy that</div>
<div class="t" style="left:5px;top:309px;letter-spacing:-0.004px;">governs the behavior of non-</div>
<div class="t" style="left:5px;top:324px;letter-spacing:0.032px;">package point and print</div>
<div class="t" style="left:5px;top:339px;letter-spacing:0.127px;">connections.</div>
<div class="t" style="left:5px;top:369px;letter-spacing:-0.110px;">Windows Vista and later clients</div>
<div class="t" style="left:5px;top:384px;letter-spacing:0.069px;">will attempt to make a non-</div>
<div class="t" style="left:5px;top:399px;letter-spacing:0.045px;">package point and print</div>
<div class="t" style="left:5px;top:414px;letter-spacing:-0.044px;">connection anytime a package</div>
<div class="t" style="left:5px;top:429px;letter-spacing:0.128px;">point and print connection fails,</div>
<div class="t" style="left:5px;top:444px;letter-spacing:0.127px;">including attempts that are</div>
<div class="t" style="left:5px;top:459px;letter-spacing:0.127px;">blocked by this policy.</div>
<div class="t" style="left:5px;top:474px;letter-spacing:-0.038px;">Administrators may need to set</div>
<div class="t" style="left:5px;top:489px;letter-spacing:0.129px;">both policies to block all print</div>
<div class="t" style="left:5px;top:504px;letter-spacing:0.020px;">connections to a specific print</div>
<div class="t" style="left:5px;top:519px;letter-spacing:-0.400px;">server.</div>
<div class="t" style="left:5px;top:549px;letter-spacing:-0.089px;">If this setting is enabled, users will</div>
<div class="t" style="left:5px;top:564px;letter-spacing:-0.041px;">only be able to package point and</div>
<div class="t" style="left:5px;top:579px;letter-spacing:-0.024px;">print to print servers approved by</div>
<div class="t" style="left:5px;top:594px;letter-spacing:0.020px;">the network administrator. When</div>
<div class="t" style="left:5px;top:609px;letter-spacing:-0.1px">using package point and print,</div>
</div>
<div class="a" style="left:394px;top:140px;width:17px;height:576px;background:#f0f0f0"></div>
<div class="a" style="left:395px;top:174px;width:15px;height:415px;background:#cdcdcd"></div>
<svg class="a" style="left:396px;top:156px;" width="13" height="11" viewBox="0 0 13 11"><path d="M2,9L6.5,4L11,9" fill="none" stroke="#606060" stroke-width="2.6" stroke-linejoin="miter"/></svg>
<svg class="a" style="left:396px;top:689px;" width="13" height="11" viewBox="0 0 13 11"><path d="M1.8,2L6.5,7.2L11.2,2" fill="none" stroke="#606060" stroke-width="2" stroke-linejoin="miter"/></svg>
<div class="t" style="left:416px;top:107px;letter-spacing:0.050px;">Setting</div>
<div class="a" style="left:760px;top:102px;width:1px;height:24px;background:#e5e5e5"></div>
<div class="a" style="left:860px;top:102px;width:1px;height:24px;background:#e5e5e5"></div>
<div class="a" style="left:1060px;top:102px;width:1px;height:24px;background:#e5e5e5"></div>
<div class="t" style="left:797px;top:107px;letter-spacing:-0.250px;">State</div>
<div class="t" style="left:934px;top:107px;letter-spacing:0.400px;">Comment</div>
<svg class="a" style="left:416px;top:128px;" width="13" height="15" viewBox="0 0 13 15"><path d="M0.5,0.5h9l3,3v11h-12z" fill="#fff" stroke="#a0a0a0"/><path d="M12.5,3.5v11h-12" fill="none" stroke="#747474"/><path d="M9.5,0.5v3h3" fill="#fff" stroke="#b8b8b8"/><rect x="3" y="4" width="2" height="2" fill="#000"/><path d="M3,9L5,7" stroke="#9a9ac8" stroke-width="1.2"/><rect x="3" y="10" width="2" height="2" fill="#000"/><rect x="6" y="5" width="4" height="1" fill="#8c8cb4"/><rect x="6" y="8" width="4" height="1" fill="#8c8cb4"/><rect x="6" y="11" width="4" height="1" fill="#8c8cb4"/></svg>
<div class="t" style="left:433px;top:129px;letter-spacing:0.088px;">Activate Internet printing</div>
<div class="t" style="left:770px;top:129px;letter-spacing:0.292px;">Not configured</div>
<div class="t" style="left:953px;top:129px;letter-spacing:0.000px;">No</div>
<svg class="a" style="left:416px;top:147px;" width="13" height="15" viewBox="0 0 13 15"><path d="M0.5,0.5h9l3,3v11h-12z" fill="#fff" stroke="#a0a0a0"/><path d="M12.5,3.5v11h-12" fill="none" stroke="#747474"/><path d="M9.5,0.5v3h3" fill="#fff" stroke="#b8b8b8"/><rect x="3" y="4" width="2" height="2" fill="#000"/><path d="M3,9L5,7" stroke="#9a9ac8" stroke-width="1.2"/><rect x="3" y="10" width="2" height="2" fill="#000"/><rect x="6" y="5" width="4" height="1" fill="#8c8cb4"/><rect x="6" y="8" width="4" height="1" fill="#8c8cb4"/><rect x="6" y="11" width="4" height="1" fill="#8c8cb4"/></svg>
<div class="t" style="left:433px;top:148px;letter-spacing:0.026px;">Isolate print drivers from applications</div>
<div class="t" style="left:770px;top:148px;letter-spacing:0.292px;">Not configured</div>
<div class="t" style="left:953px;top:148px;letter-spacing:0.000px;">No</div>
<svg class="a" style="left:416px;top:166px;" width="13" height="15" viewBox="0 0 13 15"><path d="M0.5,0.5h9l3,3v11h-12z" fill="#fff" stroke="#a0a0a0"/><path d="M12.5,3.5v11h-12" fill="none" stroke="#747474"/><path d="M9.5,0.5v3h3" fill="#fff" stroke="#b8b8b8"/><rect x="3" y="4" width="2" height="2" fill="#000"/><path d="M3,9L5,7" stroke="#9a9ac8" stroke-width="1.2"/><rect x="3" y="10" width="2" height="2" fill="#000"/><rect x="6" y="5" width="4" height="1" fill="#8c8cb4"/><rect x="6" y="8" width="4" height="1" fill="#8c8cb4"/><rect x="6" y="11" width="4" height="1" fill="#8c8cb4"/></svg>
<div class="t" style="left:433px;top:167px;letter-spacing:-0.054px;">Custom support URL in the Printers folder's left pane</div>
<div class="t" style="left:770px;top:167px;letter-spacing:0.292px;">Not configured</div>
<div class="t" style="left:953px;top:167px;letter-spacing:0.000px;">No</div>
<svg class="a" style="left:416px;top:185px;" width="13" height="15" viewBox="0 0 13 15"><path d="M0.5,0.5h9l3,3v11h-12z" fill="#fff" stroke="#a0a0a0"/><path d="M12.5,3.5v11h-12" fill="none" stroke="#747474"/><path d="M9.5,0.5v3h3" fill="#fff" stroke="#b8b8b8"/><rect x="3" y="4" width="2" height="2" fill="#000"/><path d="M3,9L5,7" stroke="#9a9ac8" stroke-width="1.2"/><rect x="3" y="10" width="2" height="2" fill="#000"/><rect x="6" y="5" width="4" height="1" fill="#8c8cb4"/><rect x="6" y="8" width="4" height="1" fill="#8c8cb4"/><rect x="6" y="11" width="4" height="1" fill="#8c8cb4"/></svg>
<div class="t" style="left:433px;top:186px;letter-spacing:-0.026px;">Extend Point and Print connection to search Windows Update</div>
<div class="t" style="left:770px;top:186px;letter-spacing:0.292px;">Not configured</div>
<div class="t" style="left:953px;top:186px;letter-spacing:0.000px;">No</div>
<svg class="a" style="left:416px;top:204px;" width="13" height="15" viewBox="0 0 13 15"><path d="M0.5,0.5h9l3,3v11h-12z" fill="#fff" stroke="#a0a0a0"/><path d="M12.5,3.5v11h-12" fill="none" stroke="#747474"/><path d="M9.5,0.5v3h3" fill="#fff" stroke="#b8b8b8"/><rect x="3" y="4" width="2" height="2" fill="#000"/><path d="M3,9L5,7" stroke="#9a9ac8" stroke-width="1.2"/><rect x="3" y="10" width="2" height="2" fill="#000"/><rect x="6" y="5" width="4" height="1" fill="#8c8cb4"/><rect x="6" y="8" width="4" height="1" fill="#8c8cb4"/><rect x="6" y="11" width="4" height="1" fill="#8c8cb4"/></svg>
<div class="t" style="left:433px;top:205px;letter-spacing:-0.047px;">Add Printer wizard - Network scan page (Managed network)</div>
<div class="t" style="left:770px;top:205px;letter-spacing:0.292px;">Not configured</div>
<div class="t" style="left:953px;top:205px;letter-spacing:0.000px;">No</div>
<svg class="a" style="left:416px;top:223px;" width="13" height="15" viewBox="0 0 13 15"><path d="M0.5,0.5h9l3,3v11h-12z" fill="#fff" stroke="#a0a0a0"/><path d="M12.5,3.5v11h-12" fill="none" stroke="#747474"/><path d="M9.5,0.5v3h3" fill="#fff" stroke="#b8b8b8"/><rect x="3" y="4" width="2" height="2" fill="#000"/><path d="M3,9L5,7" stroke="#9a9ac8" stroke-width="1.2"/><rect x="3" y="10" width="2" height="2" fill="#000"/><rect x="6" y="5" width="4" height="1" fill="#8c8cb4"/><rect x="6" y="8" width="4" height="1" fill="#8c8cb4"/><rect x="6" y="11" width="4" height="1" fill="#8c8cb4"/></svg>
<div class="t" style="left:433px;top:224px;letter-spacing:-0.122px;">Always render print jobs on the server</div>
<div class="t" style="left:770px;top:224px;letter-spacing:0.292px;">Not configured</div>
<div class="t" style="left:953px;top:224px;letter-spacing:0.000px;">No</div>
<svg class="a" style="left:416px;top:242px;" width="13" height="15" viewBox="0 0 13 15"><path d="M0.5,0.5h9l3,3v11h-12z" fill="#fff" stroke="#a0a0a0"/><path d="M12.5,3.5v11h-12" fill="none" stroke="#747474"/><path d="M9.5,0.5v3h3" fill="#fff" stroke="#b8b8b8"/><rect x="3" y="4" width="2" height="2" fill="#000"/><path d="M3,9L5,7" stroke="#9a9ac8" stroke-width="1.2"/><rect x="3" y="10" width="2" height="2" fill="#000"/><rect x="6" y="5" width="4" height="1" fill="#8c8cb4"/><rect x="6" y="8" width="4" height="1" fill="#8c8cb4"/><rect x="6" y="11" width="4" height="1" fill="#8c8cb4"/></svg>
<div class="t" style="left:433px;top:243px;letter-spacing:-0.116px;">Always rasterize content to be printed using a software raste...</div>
<div class="t" style="left:770px;top:243px;letter-spacing:0.292px;">Not configured</div>
<div class="t" style="left:953px;top:243px;letter-spacing:0.000px;">No</div>
<svg class="a" style="left:416px;top:261px;" width="13" height="15" viewBox="0 0 13 15"><path d="M0.5,0.5h9l3,3v11h-12z" fill="#fff" stroke="#a0a0a0"/><path d="M12.5,3.5v11h-12" fill="none" stroke="#747474"/><path d="M9.5,0.5v3h3" fill="#fff" stroke="#b8b8b8"/><rect x="3" y="4" width="2" height="2" fill="#000"/><path d="M3,9L5,7" stroke="#9a9ac8" stroke-width="1.2"/><rect x="3" y="10" width="2" height="2" fill="#000"/><rect x="6" y="5" width="4" height="1" fill="#8c8cb4"/><rect x="6" y="8" width="4" height="1" fill="#8c8cb4"/><rect x="6" y="11" width="4" height="1" fill="#8c8cb4"/></svg>
<div class="t" style="left:433px;top:262px;letter-spacing:0.029px;">Disallow installation of printers using kernel-mode drivers</div>
<div class="t" style="left:770px;top:262px;letter-spacing:0.292px;">Not configured</div>
<div class="t" style="left:953px;top:262px;letter-spacing:0.000px;">No</div>
<svg class="a" style="left:416px;top:280px;" width="13" height="15" viewBox="0 0 13 15"><path d="M0.5,0.5h9l3,3v11h-12z" fill="#fff" stroke="#a0a0a0"/><path d="M12.5,3.5v11h-12" fill="none" stroke="#747474"/><path d="M9.5,0.5v3h3" fill="#fff" stroke="#b8b8b8"/><rect x="3" y="4" width="2" height="2" fill="#000"/><path d="M3,9L5,7" stroke="#9a9ac8" stroke-width="1.2"/><rect x="3" y="10" width="2" height="2" fill="#000"/><rect x="6" y="5" width="4" height="1" fill="#8c8cb4"/><rect x="6" y="8" width="4" height="1" fill="#8c8cb4"/><rect x="6" y="11" width="4" height="1" fill="#8c8cb4"/></svg>
<div class="t" style="left:433px;top:281px;letter-spacing:-0.043px;">Change Microsoft XPS Document Writer (MXDW) default ou...</div>
<div class="t" style="left:770px;top:281px;letter-spacing:0.292px;">Not configured</div>
<div class="t" style="left:953px;top:281px;letter-spacing:0.000px;">No</div>
<svg class="a" style="left:416px;top:299px;" width="13" height="15" viewBox="0 0 13 15"><path d="M0.5,0.5h9l3,3v11h-12z" fill="#fff" stroke="#a0a0a0"/><path d="M12.5,3.5v11h-12" fill="none" stroke="#747474"/><path d="M9.5,0.5v3h3" fill="#fff" stroke="#b8b8b8"/><rect x="3" y="4" width="2" height="2" fill="#000"/><path d="M3,9L5,7" stroke="#9a9ac8" stroke-width="1.2"/><rect x="3" y="10" width="2" height="2" fill="#000"/><rect x="6" y="5" width="4" height="1" fill="#8c8cb4"/><rect x="6" y="8" width="4" height="1" fill="#8c8cb4"/><rect x="6" y="11" width="4" height="1" fill="#8c8cb4"/></svg>
<div class="t" style="left:433px;top:300px;letter-spacing:-0.060px;">Add Printer wizard - Network scan page (Unmanaged netwo...</div>
<div class="t" style="left:770px;top:300px;letter-spacing:0.292px;">Not configured</div>
<div class="t" style="left:953px;top:300px;letter-spacing:0.000px;">No</div>
<svg class="a" style="left:416px;top:318px;" width="13" height="15" viewBox="0 0 13 15"><path d="M0.5,0.5h9l3,3v11h-12z" fill="#fff" stroke="#a0a0a0"/><path d="M12.5,3.5v11h-12" fill="none" stroke="#747474"/><path d="M9.5,0.5v3h3" fill="#fff" stroke="#b8b8b8"/><rect x="3" y="4" width="2" height="2" fill="#000"/><path d="M3,9L5,7" stroke="#9a9ac8" stroke-width="1.2"/><rect x="3" y="10" width="2" height="2" fill="#000"/><rect x="6" y="5" width="4" height="1" fill="#8c8cb4"/><rect x="6" y="8" width="4" height="1" fill="#8c8cb4"/><rect x="6" y="11" width="4" height="1" fill="#8c8cb4"/></svg>
<div class="t" style="left:433px;top:319px;letter-spacing:-0.129px;">Only use Package Point and print</div>
<div class="t" style="left:770px;top:319px;letter-spacing:0.292px;">Not configured</div>
<div class="t" style="left:953px;top:319px;letter-spacing:0.000px;">No</div>
<div class="a" style="left:431px;top:335px;width:630px;height:19px;background:#0078d7;border:1px dotted #ff9a30;box-sizing:border-box"></div>
<svg class="a" style="left:416px;top:337px;" width="13" height="15" viewBox="0 0 13 15"><path d="M0.5,0.5h9l3,3v11h-12z" fill="#fff" stroke="#a0a0a0"/><path d="M12.5,3.5v11h-12" fill="none" stroke="#747474"/><path d="M9.5,0.5v3h3" fill="#fff" stroke="#b8b8b8"/><rect x="3" y="4" width="2" height="2" fill="#000"/><path d="M3,9L5,7" stroke="#9a9ac8" stroke-width="1.2"/><rect x="3" y="10" width="2" height="2" fill="#000"/><rect x="6" y="5" width="4" height="1" fill="#8c8cb4"/><rect x="6" y="8" width="4" height="1" fill="#8c8cb4"/><rect x="6" y="11" width="4" height="1" fill="#8c8cb4"/></svg>
<svg class="a" style="left:416px;top:337px;" width="13" height="15" viewBox="0 0 13 15"><defs><pattern id="dp" width="2" height="2" patternUnits="userSpaceOnUse"><rect x="0" y="0" width="1" height="1" fill="#0078d7"/><rect x="1" y="1" width="1" height="1" fill="#0078d7"/></pattern></defs><rect width="13" height="15" fill="url(#dp)"/></svg>
<div class="t" style="left:433px;top:338px;letter-spacing:-0.059px;color:#fff">Package Point and print - Approved servers</div>
<div class="t" style="left:770px;top:338px;letter-spacing:0.292px;color:#fff">Not configured</div>
<div class="t" style="left:953px;top:338px;letter-spacing:0.000px;color:#fff">No</div>
<svg class="a" style="left:416px;top:356px;" width="13" height="15" viewBox="0 0 13 15"><path d="M0.5,0.5h9l3,3v11h-12z" fill="#fff" stroke="#a0a0a0"/><path d="M12.5,3.5v11h-12" fill="none" stroke="#747474"/><path d="M9.5,0.5v3h3" fill="#fff" stroke="#b8b8b8"/><rect x="3" y="4" width="2" height="2" fill="#000"/><path d="M3,9L5,7" stroke="#9a9ac8" stroke-width="1.2"/><rect x="3" y="10" width="2" height="2" fill="#000"/><rect x="6" y="5" width="4" height="1" fill="#8c8cb4"/><rect x="6" y="8" width="4" height="1" fill="#8c8cb4"/><rect x="6" y="11" width="4" height="1" fill="#8c8cb4"/></svg>
<div class="t" style="left:433px;top:357px;letter-spacing:0.200px;">Computer location</div>
<div class="t" style="left:770px;top:357px;letter-spacing:0.292px;">Not configured</div>
<div class="t" style="left:953px;top:357px;letter-spacing:0.000px;">No</div>
<svg class="a" style="left:416px;top:375px;" width="13" height="15" viewBox="0 0 13 15"><path d="M0.5,0.5h9l3,3v11h-12z" fill="#fff" stroke="#a0a0a0"/><path d="M12.5,3.5v11h-12" fill="none" stroke="#747474"/><path d="M9.5,0.5v3h3" fill="#fff" stroke="#b8b8b8"/><rect x="3" y="4" width="2" height="2" fill="#000"/><path d="M3,9L5,7" stroke="#9a9ac8" stroke-width="1.2"/><rect x="3" y="10" width="2" height="2" fill="#000"/><rect x="6" y="5" width="4" height="1" fill="#8c8cb4"/><rect x="6" y="8" width="4" height="1" fill="#8c8cb4"/><rect x="6" y="11" width="4" height="1" fill="#8c8cb4"/></svg>
<div class="t" style="left:433px;top:376px;letter-spacing:0.013px;">Pre-populate printer search location text</div>
<div class="t" style="left:770px;top:376px;letter-spacing:0.292px;">Not configured</div>
<div class="t" style="left:953px;top:376px;letter-spacing:0.000px;">No</div>
<svg class="a" style="left:416px;top:394px;" width="13" height="15" viewBox="0 0 13 15"><path d="M0.5,0.5h9l3,3v11h-12z" fill="#fff" stroke="#a0a0a0"/><path d="M12.5,3.5v11h-12" fill="none" stroke="#747474"/><path d="M9.5,0.5v3h3" fill="#fff" stroke="#b8b8b8"/><rect x="3" y="4" width="2" height="2" fill="#000"/><path d="M3,9L5,7" stroke="#9a9ac8" stroke-width="1.2"/><rect x="3" y="10" width="2" height="2" fill="#000"/><rect x="6" y="5" width="4" height="1" fill="#8c8cb4"/><rect x="6" y="8" width="4" height="1" fill="#8c8cb4"/><rect x="6" y="11" width="4" height="1" fill="#8c8cb4"/></svg>
<div class="t" style="left:433px;top:395px;letter-spacing:-0.022px;">Point and Print Restrictions</div>
<div class="t" style="left:770px;top:395px;letter-spacing:0.292px;">Not configured</div>
<div class="t" style="left:953px;top:395px;letter-spacing:0.000px;">No</div>
<svg class="a" style="left:416px;top:413px;" width="13" height="15" viewBox="0 0 13 15"><path d="M0.5,0.5h9l3,3v11h-12z" fill="#fff" stroke="#a0a0a0"/><path d="M12.5,3.5v11h-12" fill="none" stroke="#747474"/><path d="M9.5,0.5v3h3" fill="#fff" stroke="#b8b8b8"/><rect x="3" y="4" width="2" height="2" fill="#000"/><path d="M3,9L5,7" stroke="#9a9ac8" stroke-width="1.2"/><rect x="3" y="10" width="2" height="2" fill="#000"/><rect x="6" y="5" width="4" height="1" fill="#8c8cb4"/><rect x="6" y="8" width="4" height="1" fill="#8c8cb4"/><rect x="6" y="11" width="4" height="1" fill="#8c8cb4"/></svg>
<div class="t" style="left:433px;top:414px;letter-spacing:-0.133px;">Execute print drivers in isolated processes</div>
<div class="t" style="left:770px;top:414px;letter-spacing:0.292px;">Not configured</div>
<div class="t" style="left:953px;top:414px;letter-spacing:0.000px;">No</div>
<svg class="a" style="left:416px;top:432px;" width="13" height="15" viewBox="0 0 13 15"><path d="M0.5,0.5h9l3,3v11h-12z" fill="#fff" stroke="#a0a0a0"/><path d="M12.5,3.5v11h-12" fill="none" stroke="#747474"/><path d="M9.5,0.5v3h3" fill="#fff" stroke="#b8b8b8"/><rect x="3" y="4" width="2" height="2" fill="#000"/><path d="M3,9L5,7" stroke="#9a9ac8" stroke-width="1.2"/><rect x="3" y="10" width="2" height="2" fill="#000"/><rect x="6" y="5" width="4" height="1" fill="#8c8cb4"/><rect x="6" y="8" width="4" height="1" fill="#8c8cb4"/><rect x="6" y="11" width="4" height="1" fill="#8c8cb4"/></svg>
<div class="t" style="left:433px;top:433px;letter-spacing:0.057px;">Override print driver execution compatibility setting reporte...</div>
<div class="t" style="left:770px;top:433px;letter-spacing:0.292px;">Not configured</div>
<div class="t" style="left:953px;top:433px;letter-spacing:0.000px;">No</div>
<svg class="a" style="left:416px;top:451px;" width="13" height="15" viewBox="0 0 13 15"><path d="M0.5,0.5h9l3,3v11h-12z" fill="#fff" stroke="#a0a0a0"/><path d="M12.5,3.5v11h-12" fill="none" stroke="#747474"/><path d="M9.5,0.5v3h3" fill="#fff" stroke="#b8b8b8"/><rect x="3" y="4" width="2" height="2" fill="#000"/><path d="M3,9L5,7" stroke="#9a9ac8" stroke-width="1.2"/><rect x="3" y="10" width="2" height="2" fill="#000"/><rect x="6" y="5" width="4" height="1" fill="#8c8cb4"/><rect x="6" y="8" width="4" height="1" fill="#8c8cb4"/><rect x="6" y="11" width="4" height="1" fill="#8c8cb4"/></svg>
<div class="t" style="left:433px;top:452px;letter-spacing:0.087px;">Printer browsing</div>
<div class="t" style="left:770px;top:452px;letter-spacing:0.292px;">Not configured</div>
<div class="t" style="left:953px;top:452px;letter-spacing:0.000px;">No</div>
<svg class="a" style="left:416px;top:470px;" width="13" height="15" viewBox="0 0 13 15"><path d="M0.5,0.5h9l3,3v11h-12z" fill="#fff" stroke="#a0a0a0"/><path d="M12.5,3.5v11h-12" fill="none" stroke="#747474"/><path d="M9.5,0.5v3h3" fill="#fff" stroke="#b8b8b8"/><rect x="3" y="4" width="2" height="2" fill="#000"/><path d="M3,9L5,7" stroke="#9a9ac8" stroke-width="1.2"/><rect x="3" y="10" width="2" height="2" fill="#000"/><rect x="6" y="5" width="4" height="1" fill="#8c8cb4"/><rect x="6" y="8" width="4" height="1" fill="#8c8cb4"/><rect x="6" y="11" width="4" height="1" fill="#8c8cb4"/></svg>
<div class="t" style="left:433px;top:471px;letter-spacing:0.026px;">Allow job name in event logs</div>
<div class="t" style="left:770px;top:471px;letter-spacing:0.292px;">Not configured</div>
<div class="t" style="left:953px;top:471px;letter-spacing:0.000px;">No</div>
<svg class="a" style="left:416px;top:489px;" width="13" height="15" viewBox="0 0 13 15"><path d="M0.5,0.5h9l3,3v11h-12z" fill="#fff" stroke="#a0a0a0"/><path d="M12.5,3.5v11h-12" fill="none" stroke="#747474"/><path d="M9.5,0.5v3h3" fill="#fff" stroke="#b8b8b8"/><rect x="3" y="4" width="2" height="2" fill="#000"/><path d="M3,9L5,7" stroke="#9a9ac8" stroke-width="1.2"/><rect x="3" y="10" width="2" height="2" fill="#000"/><rect x="6" y="5" width="4" height="1" fill="#8c8cb4"/><rect x="6" y="8" width="4" height="1" fill="#8c8cb4"/><rect x="6" y="11" width="4" height="1" fill="#8c8cb4"/></svg>
<div class="t" style="left:433px;top:490px;letter-spacing:-0.004px;">Do not allow v4 printer drivers to show printer extensions</div>
<div class="t" style="left:770px;top:490px;letter-spacing:0.292px;">Not configured</div>
<div class="t" style="left:953px;top:490px;letter-spacing:0.000px;">No</div>
<svg class="a" style="left:416px;top:508px;" width="13" height="15" viewBox="0 0 13 15"><path d="M0.5,0.5h9l3,3v11h-12z" fill="#fff" stroke="#a0a0a0"/><path d="M12.5,3.5v11h-12" fill="none" stroke="#747474"/><path d="M9.5,0.5v3h3" fill="#fff" stroke="#b8b8b8"/><rect x="3" y="4" width="2" height="2" fill="#000"/><path d="M3,9L5,7" stroke="#9a9ac8" stroke-width="1.2"/><rect x="3" y="10" width="2" height="2" fill="#000"/><rect x="6" y="5" width="4" height="1" fill="#8c8cb4"/><rect x="6" y="8" width="4" height="1" fill="#8c8cb4"/><rect x="6" y="11" width="4" height="1" fill="#8c8cb4"/></svg>
<div class="t" style="left:433px;top:509px;letter-spacing:0.053px;">Automatically publish new printers in Active Directory</div>
<div class="t" style="left:770px;top:509px;letter-spacing:0.292px;">Not configured</div>
<div class="t" style="left:953px;top:509px;letter-spacing:0.000px;">No</div>
<svg class="a" style="left:416px;top:527px;" width="13" height="15" viewBox="0 0 13 15"><path d="M0.5,0.5h9l3,3v11h-12z" fill="#fff" stroke="#a0a0a0"/><path d="M12.5,3.5v11h-12" fill="none" stroke="#747474"/><path d="M9.5,0.5v3h3" fill="#fff" stroke="#b8b8b8"/><rect x="3" y="4" width="2" height="2" fill="#000"/><path d="M3,9L5,7" stroke="#9a9ac8" stroke-width="1.2"/><rect x="3" y="10" width="2" height="2" fill="#000"/><rect x="6" y="5" width="4" height="1" fill="#8c8cb4"/><rect x="6" y="8" width="4" height="1" fill="#8c8cb4"/><rect x="6" y="11" width="4" height="1" fill="#8c8cb4"/></svg>
<div class="t" style="left:433px;top:528px;letter-spacing:0.100px;">Allow pruning of published printers</div>
<div class="t" style="left:770px;top:528px;letter-spacing:0.292px;">Not configured</div>
<div class="t" style="left:953px;top:528px;letter-spacing:0.000px;">No</div>
<svg class="a" style="left:416px;top:546px;" width="13" height="15" viewBox="0 0 13 15"><path d="M0.5,0.5h9l3,3v11h-12z" fill="#fff" stroke="#a0a0a0"/><path d="M12.5,3.5v11h-12" fill="none" stroke="#747474"/><path d="M9.5,0.5v3h3" fill="#fff" stroke="#b8b8b8"/><rect x="3" y="4" width="2" height="2" fill="#000"/><path d="M3,9L5,7" stroke="#9a9ac8" stroke-width="1.2"/><rect x="3" y="10" width="2" height="2" fill="#000"/><rect x="6" y="5" width="4" height="1" fill="#8c8cb4"/><rect x="6" y="8" width="4" height="1" fill="#8c8cb4"/><rect x="6" y="11" width="4" height="1" fill="#8c8cb4"/></svg>
<div class="t" style="left:433px;top:547px;letter-spacing:0.006px;">Prune printers that are not automatically republished</div>
<div class="t" style="left:770px;top:547px;letter-spacing:0.292px;">Not configured</div>
<div class="t" style="left:953px;top:547px;letter-spacing:0.000px;">No</div>
<svg class="a" style="left:416px;top:565px;" width="13" height="15" viewBox="0 0 13 15"><path d="M0.5,0.5h9l3,3v11h-12z" fill="#fff" stroke="#a0a0a0"/><path d="M12.5,3.5v11h-12" fill="none" stroke="#747474"/><path d="M9.5,0.5v3h3" fill="#fff" stroke="#b8b8b8"/><rect x="3" y="4" width="2" height="2" fill="#000"/><path d="M3,9L5,7" stroke="#9a9ac8" stroke-width="1.2"/><rect x="3" y="10" width="2" height="2" fill="#000"/><rect x="6" y="5" width="4" height="1" fill="#8c8cb4"/><rect x="6" y="8" width="4" height="1" fill="#8c8cb4"/><rect x="6" y="11" width="4" height="1" fill="#8c8cb4"/></svg>
<div class="t" style="left:433px;top:566px;letter-spacing:0.104px;">Directory pruning interval</div>
<div class="t" style="left:770px;top:566px;letter-spacing:0.292px;">Not configured</div>
<div class="t" style="left:953px;top:566px;letter-spacing:0.000px;">No</div>
<svg class="a" style="left:416px;top:584px;" width="13" height="15" viewBox="0 0 13 15"><path d="M0.5,0.5h9l3,3v11h-12z" fill="#fff" stroke="#a0a0a0"/><path d="M12.5,3.5v11h-12" fill="none" stroke="#747474"/><path d="M9.5,0.5v3h3" fill="#fff" stroke="#b8b8b8"/><rect x="3" y="4" width="2" height="2" fill="#000"/><path d="M3,9L5,7" stroke="#9a9ac8" stroke-width="1.2"/><rect x="3" y="10" width="2" height="2" fill="#000"/><rect x="6" y="5" width="4" height="1" fill="#8c8cb4"/><rect x="6" y="8" width="4" height="1" fill="#8c8cb4"/><rect x="6" y="11" width="4" height="1" fill="#8c8cb4"/></svg>
<div class="t" style="left:433px;top:585px;letter-spacing:0.132px;">Directory pruning priority</div>
<div class="t" style="left:770px;top:585px;letter-spacing:0.292px;">Not configured</div>
<div class="t" style="left:953px;top:585px;letter-spacing:0.000px;">No</div>
<svg class="a" style="left:416px;top:603px;" width="13" height="15" viewBox="0 0 13 15"><path d="M0.5,0.5h9l3,3v11h-12z" fill="#fff" stroke="#a0a0a0"/><path d="M12.5,3.5v11h-12" fill="none" stroke="#747474"/><path d="M9.5,0.5v3h3" fill="#fff" stroke="#b8b8b8"/><rect x="3" y="4" width="2" height="2" fill="#000"/><path d="M3,9L5,7" stroke="#9a9ac8" stroke-width="1.2"/><rect x="3" y="10" width="2" height="2" fill="#000"/><rect x="6" y="5" width="4" height="1" fill="#8c8cb4"/><rect x="6" y="8" width="4" height="1" fill="#8c8cb4"/><rect x="6" y="11" width="4" height="1" fill="#8c8cb4"/></svg>
<div class="t" style="left:433px;top:604px;letter-spacing:0.068px;">Directory pruning retry</div>
<div class="t" style="left:770px;top:604px;letter-spacing:0.292px;">Not configured</div>
<div class="t" style="left:953px;top:604px;letter-spacing:0.000px;">No</div>
<svg class="a" style="left:416px;top:622px;" width="13" height="15" viewBox="0 0 13 15"><path d="M0.5,0.5h9l3,3v11h-12z" fill="#fff" stroke="#a0a0a0"/><path d="M12.5,3.5v11h-12" fill="none" stroke="#747474"/><path d="M9.5,0.5v3h3" fill="#fff" stroke="#b8b8b8"/><rect x="3" y="4" width="2" height="2" fill="#000"/><path d="M3,9L5,7" stroke="#9a9ac8" stroke-width="1.2"/><rect x="3" y="10" width="2" height="2" fill="#000"/><rect x="6" y="5" width="4" height="1" fill="#8c8cb4"/><rect x="6" y="8" width="4" height="1" fill="#8c8cb4"/><rect x="6" y="11" width="4" height="1" fill="#8c8cb4"/></svg>
<div class="t" style="left:433px;top:623px;letter-spacing:0.048px;">Log directory pruning retry events</div>
<div class="t" style="left:770px;top:623px;letter-spacing:0.292px;">Not configured</div>
<div class="t" style="left:953px;top:623px;letter-spacing:0.000px;">No</div>
<svg class="a" style="left:416px;top:641px;" width="13" height="15" viewBox="0 0 13 15"><path d="M0.5,0.5h9l3,3v11h-12z" fill="#fff" stroke="#a0a0a0"/><path d="M12.5,3.5v11h-12" fill="none" stroke="#747474"/><path d="M9.5,0.5v3h3" fill="#fff" stroke="#b8b8b8"/><rect x="3" y="4" width="2" height="2" fill="#000"/><path d="M3,9L5,7" stroke="#9a9ac8" stroke-width="1.2"/><rect x="3" y="10" width="2" height="2" fill="#000"/><rect x="6" y="5" width="4" height="1" fill="#8c8cb4"/><rect x="6" y="8" width="4" height="1" fill="#8c8cb4"/><rect x="6" y="11" width="4" height="1" fill="#8c8cb4"/></svg>
<div class="t" style="left:433px;top:642px;letter-spacing:0.052px;">Allow printers to be published</div>
<div class="t" style="left:770px;top:642px;letter-spacing:0.292px;">Not configured</div>
<div class="t" style="left:953px;top:642px;letter-spacing:0.000px;">No</div>
<svg class="a" style="left:416px;top:660px;" width="13" height="15" viewBox="0 0 13 15"><path d="M0.5,0.5h9l3,3v11h-12z" fill="#fff" stroke="#a0a0a0"/><path d="M12.5,3.5v11h-12" fill="none" stroke="#747474"/><path d="M9.5,0.5v3h3" fill="#fff" stroke="#b8b8b8"/><rect x="3" y="4" width="2" height="2" fill="#000"/><path d="M3,9L5,7" stroke="#9a9ac8" stroke-width="1.2"/><rect x="3" y="10" width="2" height="2" fill="#000"/><rect x="6" y="5" width="4" height="1" fill="#8c8cb4"/><rect x="6" y="8" width="4" height="1" fill="#8c8cb4"/><rect x="6" y="11" width="4" height="1" fill="#8c8cb4"/></svg>
<div class="t" style="left:433px;top:661px;letter-spacing:0.006px;">Allow Print Spooler to accept client connections</div>
<div class="t" style="left:770px;top:661px;letter-spacing:0.292px;">Not configured</div>
<div class="t" style="left:953px;top:661px;letter-spacing:0.000px;">No</div>
<svg class="a" style="left:416px;top:679px;" width="13" height="15" viewBox="0 0 13 15"><path d="M0.5,0.5h9l3,3v11h-12z" fill="#fff" stroke="#a0a0a0"/><path d="M12.5,3.5v11h-12" fill="none" stroke="#747474"/><path d="M9.5,0.5v3h3" fill="#fff" stroke="#b8b8b8"/><rect x="3" y="4" width="2" height="2" fill="#000"/><path d="M3,9L5,7" stroke="#9a9ac8" stroke-width="1.2"/><rect x="3" y="10" width="2" height="2" fill="#000"/><rect x="6" y="5" width="4" height="1" fill="#8c8cb4"/><rect x="6" y="8" width="4" height="1" fill="#8c8cb4"/><rect x="6" y="11" width="4" height="1" fill="#8c8cb4"/></svg>
<div class="t" style="left:433px;top:680px;letter-spacing:-0.045px;">Check published state</div>
<div class="t" style="left:770px;top:680px;letter-spacing:0.292px;">Not configured</div>
<div class="t" style="left:953px;top:680px;letter-spacing:0.000px;">No</div>
<div class="a" style="left:269px;top:718px;width:1010px;height:1px;background:#6d6d6d"></div>
<svg class="a" style="left:196px;top:716px;" width="140" height="22" viewBox="0 0 140 22"><path d="M73,2.5H134.5L127,20.5H74L70,12" fill="#f0f0f0" stroke="#6d6d6d"/><path d="M1.5,1.5L10,20.5H66L73.5,1.5" fill="#fff" stroke="#6d6d6d"/><path d="M2,1.5h71" stroke="#fff" stroke-width="2"/></svg>
<div class="t" style="left:209px;top:721px;letter-spacing:-0.129px;">Extended</div>
<div class="t" style="left:272px;top:721px;letter-spacing:-0.014px;">Standard</div>
<div class="a" style="left:0px;top:737px;width:1280px;height:1px;background:#dadada"></div>
<div class="t" style="left:2px;top:743px;letter-spacing:-0.075px;">30 setting(s)</div>
<div class="a" style="left:1059px;top:739px;width:1px;height:21px;background:#d0d0d0"></div>
<div class="a" style="left:1192px;top:739px;width:1px;height:21px;background:#d0d0d0"></div>
<div class="a" style="left:1277px;top:739px;width:1px;height:21px;background:#d0d0d0"></div>
<div class="a" style="left:0px;top:760px;width:1280px;height:40px;background:#031620"></div>
<svg class="a" style="left:16px;top:772px;" width="17" height="17" viewBox="0 0 17 17"><path d="M0,2.2L7,1.2V8H0z M8,1L16,0V8H8z M0,9H7V15.8L0,14.8z M8,9H16V17L8,16z" fill="#fff"/></svg>
<svg class="a" style="left:63px;top:768px;" width="24" height="24" viewBox="0 0 24 24"><defs><linearGradient id="ge1" x1="0" y1="0" x2="1" y2="0.6"><stop offset="0" stop-color="#30b0f0"/><stop offset="0.5" stop-color="#2cc8c8"/><stop offset="1" stop-color="#6ae05a"/></linearGradient></defs><circle cx="12" cy="12" r="12" fill="url(#ge1)"/><path d="M0.2,11.5C1,6.5 6,6 9.5,7C12.5,8 14,9.5 15.5,11C12.5,9.5 9.5,11 9.3,14C9,18 13,21.5 20.5,21A12,12 0 0 1 0.2,11.5Z" fill="#1a88e0"/><path d="M9.3,14C9,18 13,21.5 20.5,21A12,12 0 0 1 12,24C8,23.5 7.5,18 9.3,14Z" fill="#1656b0"/><path d="M9.4,13.5C10,10 13.5,9.7 16,11.8C14.6,12.6 15,15.5 17,17C19.5,18.8 22,18.5 23.6,17.5C23.2,18.8 22.5,19.8 21.8,20.3C18,20.8 13.5,20.2 11,17.8C9.8,16.6 9.3,15 9.4,13.5Z" fill="#031620"/></svg>
<svg class="a" style="left:113px;top:771px;" width="22" height="18" viewBox="0 0 22 18"><path d="M0,1h7l1,1.5h14v15.5h-22z" fill="#fcd257"/><rect x="0" y="1" width="7" height="2" fill="#e8a810"/><path d="M4.5,18v-7h13v7h-3.5v-3.5h-6v3.5z" fill="#3a8ee6"/></svg>
<div class="a" style="left:153px;top:798px;width:152px;height:2px;background:#76b9ed"></div>
<svg class="a" style="left:158px;top:767px;" width="26" height="26" viewBox="0 0 26 26"><rect x="1.5" y="1.5" width="11" height="21" fill="#1e88dc" stroke="#e8f4ff"/><rect x="2" y="6" width="10" height="1" fill="#e8f4ff"/><path d="M11.5,13.5v-2h6v2" fill="#7890a8" stroke="#e8f4ff"/><rect x="5.5" y="13.5" width="19" height="11" rx="1.2" fill="#7892aa" stroke="#f4f8fc"/><rect x="7" y="17" width="16" height="1" fill="#e8eef4"/><rect x="8" y="16.5" width="1.5" height="2" fill="#e8eef4"/><rect x="20" y="16.5" width="1.5" height="2" fill="#e8eef4"/></svg>
<div class="t" style="left:186px;top:773px;letter-spacing:-0.238px;color:#fff">Server Manager</div>
<svg class="a" style="left:321px;top:767px;" width="25" height="25" viewBox="0 0 25 25"><defs><linearGradient id="gcm" x1="0" y1="0" x2="1" y2="0"><stop offset="0" stop-color="#0818b8"/><stop offset="0.45" stop-color="#0a28e0"/><stop offset="0.6" stop-color="#c8d8ff"/><stop offset="1" stop-color="#7090f0"/></linearGradient><linearGradient id="gtb" x1="0" y1="0" x2="0" y2="1"><stop offset="0" stop-color="#e8ecef"/><stop offset="1" stop-color="#9aa4ac"/></linearGradient></defs><rect x="3" y="6" width="6" height="9" fill="#c4c8cc"/><path d="M8.5,1.5L23.5,2.5V15.5L8.5,13.5Z" fill="#e4e8ec" stroke="#b8c0c8"/><path d="M10,3.3L22,4.2V14L10,12.3Z" fill="url(#gcm)"/><path d="M1,14.5H18L19,23.5H1.5Z" fill="url(#gtb)"/><rect x="1" y="17" width="17.5" height="0.8" fill="#b8c0c6"/><rect x="4" y="18" width="1.5" height="2" fill="#7a8288"/><rect x="10.5" y="18" width="2.5" height="1.5" fill="#f4f6f8"/></svg>
<div class="a" style="left:363px;top:798px;width:152px;height:2px;background:#76b9ed"></div>
<svg class="a" style="left:370px;top:768px;" width="24" height="24" viewBox="0 0 24 24"><path d="M4.5,1.5h16a2,2 0 0 1 0,4h-1.5v13h-14z" fill="#fdf3cf" stroke="#c8b47a"/><path d="M1.5,17.5h15a2.5,2.5 0 0 1 0,5h-15a2.5,2.5 0 0 1 0,-5z" fill="#f6e8bb" stroke="#c8b47a"/><rect x="7" y="5" width="9" height="1" fill="#a0a0b8"/><rect x="7" y="8" width="9" height="1" fill="#a0a0b8"/><rect x="7" y="11" width="9" height="1" fill="#a0a0b8"/><rect x="10.5" y="14.5" width="12" height="8" fill="#a8b0b8" stroke="#e0e4e8"/><rect x="14" y="12.5" width="5" height="2" fill="none" stroke="#e0e4e8"/></svg>
<div class="t" style="left:396px;top:773px;letter-spacing:0.011px;color:#fff">Group Policy Mana...</div>
<div class="a" style="left:520px;top:760px;width:160px;height:40px;background:#37434b"></div>
<div class="a" style="left:520px;top:798px;width:160px;height:2px;background:#76b9ed"></div>
<svg class="a" style="left:531px;top:768px;" width="24" height="24" viewBox="0 0 24 24"><path d="M4.5,1.5h16a2,2 0 0 1 0,4h-1.5v14h-14z" fill="#fdf3cf" stroke="#c8b47a"/><path d="M1.5,17.5h14a2.5,2.5 0 0 1 0,5h-14a2.5,2.5 0 0 1 0,-5z" fill="#f6e8bb" stroke="#c8b47a"/><rect x="7" y="5" width="9" height="1" fill="#a0a0b8"/><rect x="7" y="7.5" width="9" height="1" fill="#a0a0b8"/><rect x="7" y="10" width="9" height="1" fill="#a0a0b8"/><rect x="7" y="12.5" width="9" height="1" fill="#a0a0b8"/><rect x="7" y="15" width="9" height="1" fill="#a0a0b8"/></svg>
<div class="t" style="left:557px;top:773px;letter-spacing:0.026px;color:#fff">Group Policy Mana...</div>
<svg class="a" style="left:1097px;top:775px;" width="13" height="9" viewBox="0 0 13 9"><path d="M0.5,8L6.5,1.5L12.5,8" fill="none" stroke="#fff" stroke-width="1.2"/></svg>
<svg class="a" style="left:1118px;top:771px;" width="18" height="18" viewBox="0 0 18 18"><g fill="none" stroke="#fff" stroke-width="1"><circle cx="8" cy="8" r="7.2"/><ellipse cx="8" cy="8" rx="3.2" ry="7.2"/><path d="M1,5.5H15M1,10.5H11"/></g><circle cx="13.5" cy="13.5" r="3.8" fill="#031620" stroke="#fff" stroke-width="1"/><path d="M11,16L16,11" stroke="#fff" stroke-width="1"/></svg>
<svg class="a" style="left:1142px;top:772px;" width="16" height="15" viewBox="0 0 16 15"><path d="M0.5,5H3.5L8,1V14L3.5,10H0.5z" fill="none" stroke="#fff" stroke-width="1"/><path d="M10,5L15,10M15,5L10,10" stroke="#fff" stroke-width="1.1"/></svg>
<div class="t" style="left:1172px;top:764px;letter-spacing:0.200px;color:#fff">9:04 AM</div>
<div class="t" style="left:1166px;top:782px;letter-spacing:-0.256px;color:#fff">12/30/2021</div>
<svg class="a" style="left:1238px;top:771px;" width="18" height="17" viewBox="0 0 18 17"><path d="M0.5,0.5H16.5V12.5H10.5L8.5,15L6.5,12.5H0.5z" fill="none" stroke="#fff" stroke-width="1"/></svg>
<div class="a" style="left:1275px;top:760px;width:1px;height:40px;background:#5a6670"></div>
</body></html>
